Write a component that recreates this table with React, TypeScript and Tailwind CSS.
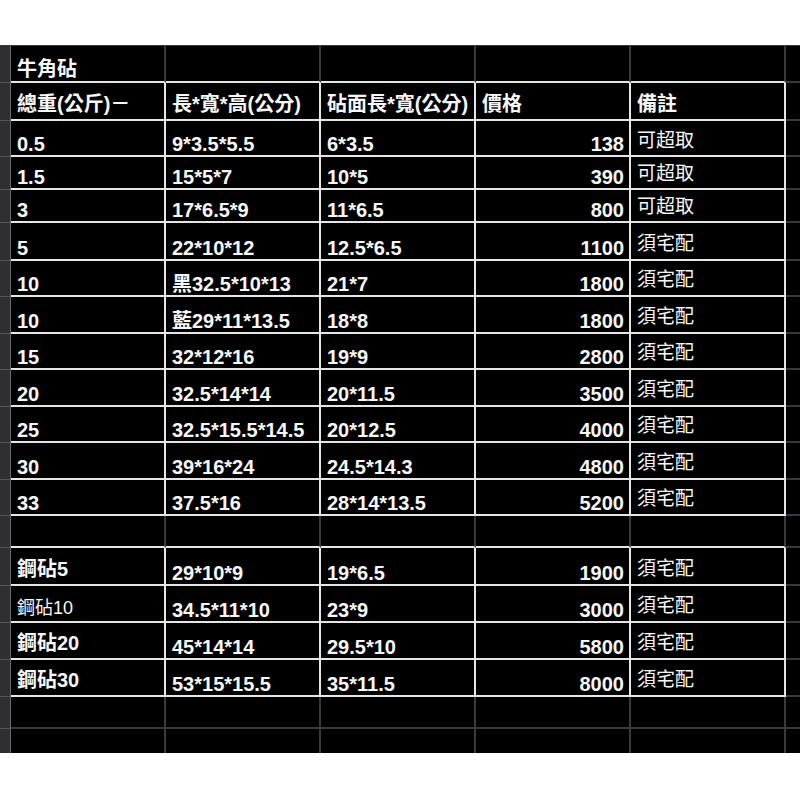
import React from 'react';

type RowDef = {
  h: number;
  boxed: boolean;
  cells: string[];
};

const FONT = '"Liberation Sans", "Noto Sans CJK TC", Arial, sans-serif';

const anvils: string[][] = [
  ['0.5', '9*3.5*5.5', '6*3.5', '138', '可超取'],
  ['1.5', '15*5*7', '10*5', '390', '可超取'],
  ['3', '17*6.5*9', '11*6.5', '800', '可超取'],
  ['5', '22*10*12', '12.5*6.5', '1100', '須宅配'],
  ['10', '黑32.5*10*13', '21*7', '1800', '須宅配'],
  ['10', '藍29*11*13.5', '18*8', '1800', '須宅配'],
  ['15', '32*12*16', '19*9', '2800', '須宅配'],
  ['20', '32.5*14*14', '20*11.5', '3500', '須宅配'],
  ['25', '32.5*15.5*14.5', '20*12.5', '4000', '須宅配'],
  ['30', '39*16*24', '24.5*14.3', '4800', '須宅配'],
  ['33', '37.5*16', '28*14*13.5', '5200', '須宅配'],
];

const steel: string[][] = [
  ['鋼砧5', '29*10*9', '19*6.5', '1900', '須宅配'],
  ['鋼砧10', '34.5*11*10', '23*9', '3000', '須宅配'],
  ['鋼砧20', '45*14*14', '29.5*10', '5800', '須宅配'],
  ['鋼砧30', '53*15*15.5', '35*11.5', '8000', '須宅配'],
];

const anvilHeights = [36, 33, 33, 38, 36, 37, 36, 37, 36, 37, 36];
const steelHeights = [38, 37, 37, 37];

const rows: RowDef[] = [
  { h: 37, boxed: false, cells: ['牛角砧', '', '', '', ''] },
  { h: 38, boxed: true, cells: ['總重(公斤)－', '長*寬*高(公分)', '砧面長*寬(公分)', '價格', '備註'] },
  ...anvils.map((cells, i) => ({ h: anvilHeights[i], boxed: true, cells })),
  { h: 32, boxed: false, cells: ['', '', '', '', ''] },
  ...steel.map((cells, i) => ({ h: steelHeights[i], boxed: true, cells })),
  { h: 32, boxed: false, cells: ['', '', '', '', ''] },
  { h: 30, boxed: false, cells: ['', '', '', '', ''] },
];

const Row: React.FC<{ row: RowDef; nextBoxed: boolean; index: number }> = ({ row, nextBoxed, index }) => {
  const bottomWhite = row.boxed || nextBoxed;
  const isHeader = index === 1;
  const isTitle = index === 0;
  return (
    <div className="flex" style={{ height: row.h }}>
      {/* row header strip */}
      <div className="w-[11px] shrink-0 bg-[#2e2e33] border-r border-b border-r-[#6b6b70] border-b-[#55555b]" />
      {row.cells.map((text, c) => {
        const price = c === 3 && !isHeader;
        const note = c === 4 && !isHeader;
        const light = note && text === '可超取';
        const thin = text === '鋼砧10';
        const steelName = c === 0 && text.startsWith('鋼砧');
        let cls = 'text-[20px] font-bold';
        if (light) cls = 'text-[19px] font-normal pb-[3px]';
        else if (note) cls = 'text-[19px] font-normal pb-[4px]';
        else if (thin) cls = 'text-[18px] font-normal pb-[2px]';
        else if (steelName) cls = 'text-[20px] font-bold pb-[4px]';
        else if (isHeader) cls = 'text-[20px] font-bold pb-[4px]';
        else if (isTitle) cls = 'text-[20px] font-bold pb-[1px]';
        return (
          <div
            key={c}
            className={`w-[155px] shrink-0 flex items-end border-r-2 border-b-2 px-[6px] ${
              row.boxed ? 'border-r-[#e6e6e6]' : 'border-r-[#3a3a3e]'
            } ${bottomWhite ? 'border-b-[#e6e6e6]' : 'border-b-[#3a3a3e]'} ${
              price ? 'justify-end pr-[5px]' : ''
            }`}
          >
            <span
              className={`whitespace-nowrap leading-[22px] text-[#f7f7f7] ${cls}`}
              style={{ fontFamily: FONT }}
            >
              {text}
            </span>
          </div>
        );
      })}
      <div className="flex-1 border-b-2 border-b-[#3a3a3e]" />
    </div>
  );
};

export default function App() {
  return (
    <div className="w-[800px] h-[800px] bg-white overflow-hidden pt-[45px]">
      <div className="h-[708px] bg-black overflow-hidden border-t border-t-[#3a3a3e]">
        {rows.map((row, i) => (
          <Row key={i} index={i} row={row} nextBoxed={rows[i + 1]?.boxed ?? false} />
        ))}
      </div>
    </div>
  );
}
